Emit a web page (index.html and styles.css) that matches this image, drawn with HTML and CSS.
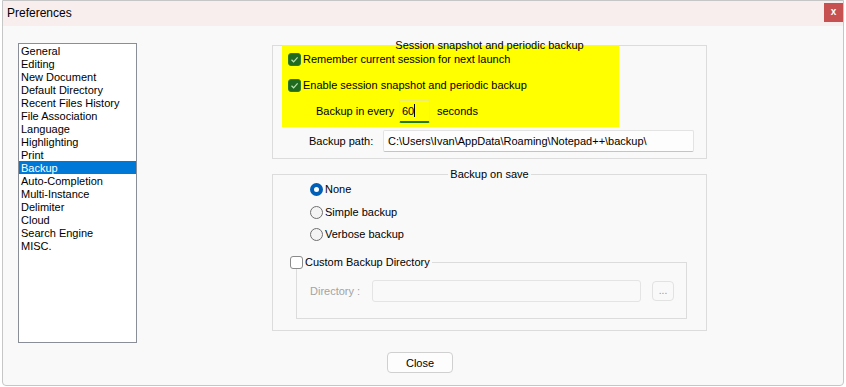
FILE: index.html
```html
<!DOCTYPE html>
<html lang="en">
<head>
  <meta charset="UTF-8">
  <title>Preferences</title>
  <link rel="stylesheet" href="styles.css">
</head>
<body>
<div class="window">
  <div class="titlebar">
    <span class="title">Preferences</span>
    <span class="close-x">x</span>
  </div>

  <div class="main">
    <ul class="pages">
      <li>General</li>
      <li>Editing</li>
      <li>New Document</li>
      <li>Default Directory</li>
      <li>Recent Files History</li>
      <li>File Association</li>
      <li>Language</li>
      <li>Highlighting</li>
      <li>Print</li>
      <li class="selected">Backup</li>
      <li>Auto-Completion</li>
      <li>Multi-Instance</li>
      <li>Delimiter</li>
      <li>Cloud</li>
      <li>Search Engine</li>
      <li>MISC.</li>
    </ul>

    <div class="panel">
      <fieldset class="group">
        <legend>Session snapshot and periodic backup</legend>
        <div class="highlight">
          <div class="check-row">
            <span class="check on"><svg width="13" height="13" viewBox="0 0 13 13"><path d="M3.5 6.8 L5.6 8.8 L9.6 4.4" fill="none" stroke="#b9e3b0" stroke-width="1.2"/></svg></span>
            Remember current session for next launch
          </div>
          <div class="check-row second">
            <span class="check on"><svg width="13" height="13" viewBox="0 0 13 13"><path d="M3.5 6.8 L5.6 8.8 L9.6 4.4" fill="none" stroke="#b9e3b0" stroke-width="1.2"/></svg></span>
            Enable session snapshot and periodic backup
          </div>
          <div class="interval-row">
            <span class="interval-label">Backup in every</span>
            <span class="num-input">60<span class="caret"></span></span>
            <span class="unit">seconds</span>
          </div>
        </div>
        <div class="path-row">
          <span class="path-label">Backup path:</span>
          <span class="text-input">C:\Users\Ivan\AppData\Roaming\Notepad++\backup\</span>
        </div>
      </fieldset>

      <fieldset class="group group-save">
        <legend>Backup on save</legend>
        <div class="radio-row"><span class="radio on"></span>None</div>
        <div class="radio-row simple"><span class="radio"></span>Simple backup</div>
        <div class="radio-row verbose"><span class="radio"></span>Verbose backup</div>

        <fieldset class="subgroup">
          <legend><span class="check"></span>Custom Backup Directory</legend>
          <div class="dir-row">
            <span class="dir-label">Directory :</span>
            <span class="dir-input"></span>
            <span class="dots-btn">...</span>
          </div>
        </fieldset>
      </fieldset>
    </div>
  </div>

  <div class="footer">
    <button class="btn">Close</button>
  </div>
</div>
</body>
</html>
```

FILE: styles.css
```css
body {
  margin: 0;
  background-color: #fff;
  font-family: "Liberation Sans", Arial, sans-serif;
  font-size: 11px;
  color: #000;
}
.window {
  box-sizing: border-box;
  width: 842px;
  height: 386px;
  margin-left: 2px;
  background-color: #f9f9f9;
  border: 1px solid #c6c6c6;
  border-radius: 0 0 4px 4px;
}
.titlebar {
  height: 25px;
  display: flex;
  justify-content: space-between;
  align-items: flex-start;
  background-color: #f9eeee;
}
.title {
  padding-left: 4px;
  line-height: 25px;
  font-size: 12px;
}
.close-x {
  width: 19px;
  height: 19px;
  margin-top: 2px;
  background-color: #c75050;
  color: #fff;
  font-weight: bold;
  font-size: 10px;
  line-height: 18px;
  text-align: center;
}
.main {
  display: flex;
  align-items: flex-start;
  padding: 12px 0 0 15px;
}

/* page list */
.pages {
  box-sizing: border-box;
  width: 119px;
  height: 300px;
  margin: 5px 0 0 0;
  padding: 0;
  list-style: none;
  background-color: #fff;
  border: 1px solid #8a8e96;
}
.pages li {
  height: 13px;
  line-height: 14px;
  padding-left: 2px;
  white-space: nowrap;
}
.pages li.selected {
  background-color: #0078d7;
  color: #fff;
}

/* right side */
.panel {
  width: 435px;
  margin-left: 135px;
}
.group {
  min-width: 0;
  margin: 0;
  padding: 0 0 6px 0;
  border: 1px solid #dcdcdc;
}
.group > legend {
  position: relative;
  z-index: 1;
  margin: 0 auto;
  padding: 0 2px;
  line-height: 14px;
}
.highlight {
  box-sizing: border-box;
  width: 337px;
  height: 82px;
  margin: -7px 0 0 9px;
  padding: 7px 0 0 6px;
  background-color: #ffff00;
}
.check-row {
  display: flex;
  align-items: center;
  gap: 2px;
  height: 14px;
}
.check-row.second {
  margin-top: 12px;
}
.check {
  box-sizing: border-box;
  display: inline-block;
  width: 13px;
  height: 13px;
  background-color: #fff;
  border: 1px solid #8a8a8a;
  border-radius: 3px;
}
.check.on {
  background-color: #1f6a1f;
  border-color: #2f7a2f;
}
.check svg {
  display: block;
  margin: -1px;
}
.interval-row {
  display: flex;
  align-items: center;
  height: 22px;
  margin-top: 8px;
  padding-left: 28px;
}
.interval-label {
  width: 83px;
}
.num-input {
  box-sizing: border-box;
  display: flex;
  align-items: center;
  width: 31px;
  height: 23px;
  padding-left: 2px;
  border: 1px solid #eded70;
  border-bottom: 2px solid #1d7a1d;
  border-radius: 2px;
}
.caret {
  display: inline-block;
  width: 1px;
  height: 13px;
  background-color: #000;
}
.unit {
  margin-left: 7px;
}
.path-row {
  display: flex;
  align-items: center;
  margin-top: 3px;
  padding-left: 36px;
}
.path-label {
  width: 74px;
}
.text-input {
  box-sizing: border-box;
  width: 311px;
  height: 22px;
  line-height: 20px;
  padding-left: 4px;
  background-color: #fdfdfd;
  border: 1px solid #e3e3e3;
  border-bottom-color: #c4c4c4;
  border-radius: 2px;
}

/* backup on save */
.group-save {
  margin-top: 8px;
  padding-bottom: 11px;
}
.radio-row {
  display: flex;
  align-items: center;
  gap: 2px;
  height: 16px;
  padding-left: 37px;
}
.radio-row.simple {
  margin-top: 7px;
}
.radio-row.verbose {
  margin-top: 6px;
}
.radio {
  box-sizing: border-box;
  width: 13px;
  height: 13px;
  border: 1px solid #6f6f6f;
  border-radius: 50%;
  background-color: #f4f4f4;
}
.radio.on {
  border: 4px solid #005fb8;
  background-color: #fff;
}
.subgroup {
  box-sizing: border-box;
  width: 391px;
  min-width: 0;
  margin: 13px 0 0 23px;
  padding: 11px 0 16px 13px;
  border: 1px solid #dcdcdc;
}
.subgroup > legend {
  display: flex;
  align-items: center;
  gap: 2px;
  margin-left: -20px;
  padding: 0 2px 0 0;
  line-height: 14px;
}
.dir-row {
  display: flex;
  align-items: center;
  height: 22px;
}
.dir-label {
  width: 62px;
  color: #a3a3a3;
}
.dir-input {
  box-sizing: border-box;
  width: 269px;
  height: 22px;
  border: 1px solid #e4e4e4;
  border-radius: 3px;
}
.dots-btn {
  box-sizing: border-box;
  width: 22px;
  height: 20px;
  margin-left: 11px;
  border: 1px solid #e2e2e2;
  border-radius: 4px;
  color: #8f8fb8;
  font-size: 10px;
  line-height: 18px;
  text-align: center;
}

.footer {
  padding: 9px 0 0 384px;
}
.btn {
  box-sizing: border-box;
  width: 66px;
  height: 21px;
  padding: 0;
  background-color: #fdfdfd;
  border: 1px solid #d0d0d0;
  border-radius: 4px;
  font-family: "Liberation Sans", Arial, sans-serif;
  font-size: 11px;
  color: #000;
}
```
